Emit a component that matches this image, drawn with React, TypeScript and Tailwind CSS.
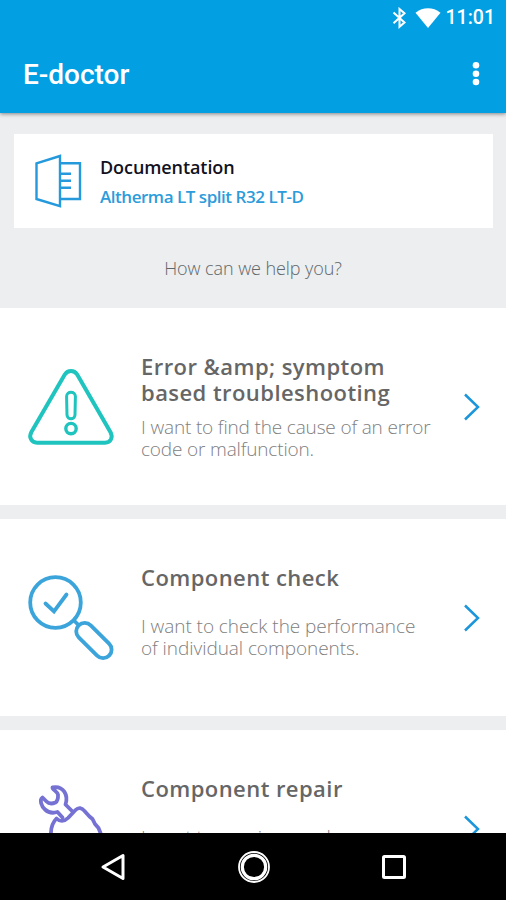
import type { ReactNode } from "react";

type TopicProps = {
  icon: ReactNode;
  title: ReactNode;
  text: ReactNode;
  textClass: string;
};

function Chevron() {
  return (
    <svg
      width="18"
      height="28"
      viewBox="0 0 18 28"
      fill="none"
      stroke="#1b95db"
      strokeWidth="2.5"
      className="mt-[85px] ml-auto mr-[25px] shrink-0"
    >
      <path d="M2 1.5 15 14 2 26.5" />
    </svg>
  );
}

function Topic({ icon, title, text, textClass }: TopicProps) {
  return (
    <li className="flex h-[197px] bg-white">
      <div className="w-[141px] shrink-0">{icon}</div>
      <div className="pt-[45px] whitespace-nowrap">
        <h2 className="text-[22px] leading-[26px] font-semibold tracking-[0.44px] text-[#666]">
          {title}
        </h2>
        <p
          className={`text-[19px] leading-[21.5px] font-light text-[#808080] ${textClass}`}
        >
          {text}
        </p>
      </div>
      <Chevron />
    </li>
  );
}

function WarningIcon() {
  return (
    <svg
      width="115"
      height="110"
      viewBox="0 0 115 110"
      fill="none"
      stroke="#1fc4bf"
      strokeWidth="4"
      className="ml-[15px] mt-[42px]"
    >
      <path d="M49.8 24.5 16.4 82C13.6 87 16.2 92.7 22 92.7H90C96 92.7 98.2 87 95.4 82L62.2 24.5C59.2 19.8 52.8 19.8 49.8 24.5Z" />
      <path
        d="M51.6 46.5C51.6 40.8 60.4 40.8 60.4 46.5L60 65C59.8 70 52.2 70 52 65Z"
        strokeWidth="3"
      />
      <circle cx="56" cy="78.6" r="5.2" strokeWidth="3.4" />
    </svg>
  );
}

function CheckIcon() {
  return (
    <svg
      width="115"
      height="105"
      viewBox="0 0 115 105"
      fill="none"
      stroke="#3ba4da"
      strokeWidth="3.8"
      className="ml-[15px] mt-[46px]"
    >
      <circle cx="40.5" cy="37.5" r="25.3" />
      <path d="M30.5 38.5 39 46.5 51.5 29.5" strokeLinecap="round" />
      <path d="M58.5 55 64 60.5" />
      <rect
        x="57.4"
        y="67"
        width="43"
        height="17"
        rx="8.5"
        transform="rotate(45 78.9 75.5)"
      />
    </svg>
  );
}

function RepairIcon() {
  return (
    <svg
      width="115"
      height="105"
      viewBox="0 0 115 105"
      fill="none"
      stroke="#7572d4"
      strokeWidth="3.8"
      strokeLinejoin="round"
      strokeLinecap="round"
      className="ml-[15px] mt-[40px]"
    >
      <path d="M56.5 40.5 50.5 34.5C53.5 25.5 49 15.5 37.5 17.3 37 19.5 42.5 21.5 43 24.5 43.2 28 42.5 31 40.5 32.5 37 34 33.5 33.5 31.5 31.5L27.5 27.5C24 30 26.5 36.5 30 39.5 33.5 42.8 38.5 43.2 42.5 42L47.5 47.5" />
      <path d="M36 66C35.5 59 37.5 52.5 41.5 48.5 44.5 51.5 49 52 53 48L60.5 40C63.5 37 67 37.5 69.5 41L74.5 46.5 77.5 49 80 54 83.5 58 85.5 63V68" />
    </svg>
  );
}

function DocumentIcon() {
  return (
    <svg
      width="48"
      height="56"
      viewBox="0 0 48 56"
      fill="none"
      stroke="#2499dc"
      strokeWidth="2.4"
      className="ml-5 shrink-0"
    >
      <path d="M26 3 2.5 10.3V46L26 53.2Z" />
      <path d="M26 10.3H46V46H26" />
      <path d="M26 20.8H37M26 27.8H37M26 34.8H37" />
    </svg>
  );
}

export default function App() {
  return (
    <div className="flex h-[900px] w-[506px] flex-col overflow-hidden bg-[#eceeef] font-['Open_Sans',sans-serif]">
      <header className="z-10 h-[113px] shrink-0 bg-[#029fe3] font-[Roboto,sans-serif] text-white shadow-[0_1px_4px_rgba(0,0,0,0.45)]">
        {/* Status bar */}
        <div className="flex h-9 items-center justify-end pr-[11px]">
          <svg
            width="16"
            height="22"
            viewBox="0 0 16 22"
            fill="none"
            stroke="white"
            strokeWidth="2"
            className="mr-[8px]"
          >
            <path d="M2.5 5.5 13.5 15.5 8.5 19.8V2L13.5 6.3 2.5 16.3" />
          </svg>
          <svg width="26" height="20" viewBox="0 0 26 20" fill="white">
            <path d="M0.5 4.7C8 -1.1 18 -1.1 25.5 4.7L13 20Z" />
          </svg>
          <span className="ml-[5px] text-[19.5px] leading-6 font-medium">
            11:01
          </span>
        </div>
        {/* Title bar */}
        <div className="flex h-[77px] items-center justify-between pr-[26px] pl-[23px]">
          <h1 className="text-[28px] leading-8 font-medium">E-doctor</h1>
          <svg width="8" height="26" viewBox="0 0 8 26" fill="white">
            <circle cx="4" cy="3.3" r="3.3" />
            <circle cx="4" cy="11.7" r="3.3" />
            <circle cx="4" cy="20" r="3.3" />
          </svg>
        </div>
      </header>

      <main className="min-h-0 flex-1 overflow-hidden">
        <section className="h-[195px] pt-[21px]">
          <div className="mr-[13px] ml-[14px] flex h-[94px] items-center bg-white whitespace-nowrap">
            <DocumentIcon />
            <div className="ml-[18px] pt-px font-semibold">
              <p className="text-[18px] leading-[30px] tracking-[-0.08px] text-[#111122]">
                Documentation
              </p>
              <p className="text-[17px] leading-[30px] tracking-[-0.46px] text-[#2c9cdb]">
                Altherma LT split R32 LT-D
              </p>
            </div>
          </div>
          <p className="mt-[28px] text-center text-[18px] leading-6 font-light tracking-[-0.08px] text-[#60676b]">
            How can we help you?
          </p>
        </section>

        <ul className="flex flex-col gap-[14px]">
          <Topic
            icon={<WarningIcon />}
            title={
              <>
                Error &amp;amp; symptom
                <br />
                based troubleshooting
              </>
            }
            text={
              <>
                I want to find the cause of an error
                <br />
                code or malfunction.
              </>
            }
            textClass="mt-[12px] tracking-[-0.16px]"
          />
          <Topic
            icon={<CheckIcon />}
            title="Component check"
            text={
              <>
                I want to check the performance
                <br />
                of individual components.
              </>
            }
            textClass="mt-[26px] tracking-[-0.06px]"
          />
          <Topic
            icon={<RepairIcon />}
            title="Component repair"
            text="I want to repair or replace"
            textClass="mt-[26px] tracking-[-0.06px]"
          />
        </ul>
      </main>

      {/* System navigation */}
      <nav className="grid h-[67px] shrink-0 grid-cols-[225px_57px_224px] items-center bg-black">
        <svg
          width="26"
          height="30"
          viewBox="0 0 26 30"
          fill="none"
          stroke="white"
          strokeWidth="3"
          strokeLinejoin="round"
          className="ml-[100px]"
        >
          <path d="M23 3.5V26.5L3 15Z" />
        </svg>
        <svg
          width="34"
          height="34"
          viewBox="0 0 34 34"
          fill="none"
          stroke="white"
          className="mx-auto"
        >
          <circle cx="17" cy="17" r="15" strokeWidth="1.8" />
          <circle cx="17" cy="17" r="11.7" strokeWidth="3.2" />
        </svg>
        <svg
          width="26"
          height="26"
          viewBox="0 0 26 26"
          fill="none"
          stroke="white"
          strokeWidth="3"
          className="ml-[99px]"
        >
          <rect x="2.5" y="2.5" width="21" height="21" rx="1" />
        </svg>
      </nav>
    </div>
  );
}
